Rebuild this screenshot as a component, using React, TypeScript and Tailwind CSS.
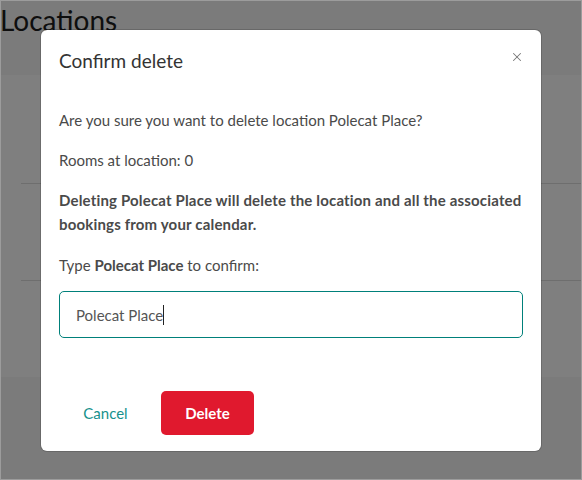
import { X } from 'lucide-react';

const font = { fontFamily: '"Lato", "Noto Sans", sans-serif' };

export default function App() {
  return (
    <div className="relative w-[582px] h-[480px] overflow-hidden border border-[#9c9c9c]" style={font}>
      {/* page behind the dialog */}
      <div className="flex flex-col h-full bg-[#f6f6f6]">
        <div className="h-[74px] shrink-0">
          <h1 className="text-[28px] leading-[36px] text-[#1c1c1c] -ml-[1px] mt-[1px]">Locations</h1>
        </div>
        <div className="h-[302px] shrink-0 bg-white flex flex-col pl-[20px]">
          <div className="h-[109px] border-b border-[#dcdcdc]" />
          <div className="h-[97px] border-b border-[#dcdcdc]" />
        </div>
      </div>

      {/* overlay */}
      <div className="absolute inset-0 bg-black/50 flex pl-[40px] pt-[29px]">
        <div className="w-[500px] h-[421px] bg-white rounded-[6px] shadow-[0_0_0_1px_rgba(0,0,0,0.15)] flex flex-col px-[18px] pt-[19px] pb-[16px]">
          <div className="flex items-center justify-between">
            <h2 className="text-[19px] leading-[24px] text-[#333]">Confirm delete</h2>
            <button className="text-[#777] -mr-[1px] -mt-[8px]">
              <X className="w-[14px] h-[14px]" strokeWidth={1.75} />
            </button>
          </div>

          <div className="mt-[35px] text-[15px] leading-[24px] text-[#4a4a4a] flex flex-col">
            <p>Are you sure you want to delete location Polecat Place?</p>
            <p className="mt-[16px]">Rooms at location: 0</p>
            <p className="mt-[16px] font-bold tracking-[0.17px]">
              Deleting Polecat Place will delete the location and all the associated bookings from your calendar.
            </p>
            <p className="mt-[17px]">
              Type <span className="font-bold">Polecat Place</span> to confirm:
            </p>
            <div className="mt-[14px] h-[47px] rounded-[5px] border border-[#00807a] flex items-center px-[16px] text-[#555]">
              <span>Polecat Place</span>
              <span className="w-px h-[20px] bg-[#222]" />
            </div>
          </div>

          <div className="mt-auto flex items-center gap-[9px]">
            <button className="w-[93px] h-[44px] text-[15px] text-[#16918c]">Cancel</button>
            <button className="w-[93px] h-[44px] rounded-[5px] bg-[#e0192e] text-white text-[15px] font-bold">
              Delete
            </button>
          </div>
        </div>
      </div>
    </div>
  );
}
